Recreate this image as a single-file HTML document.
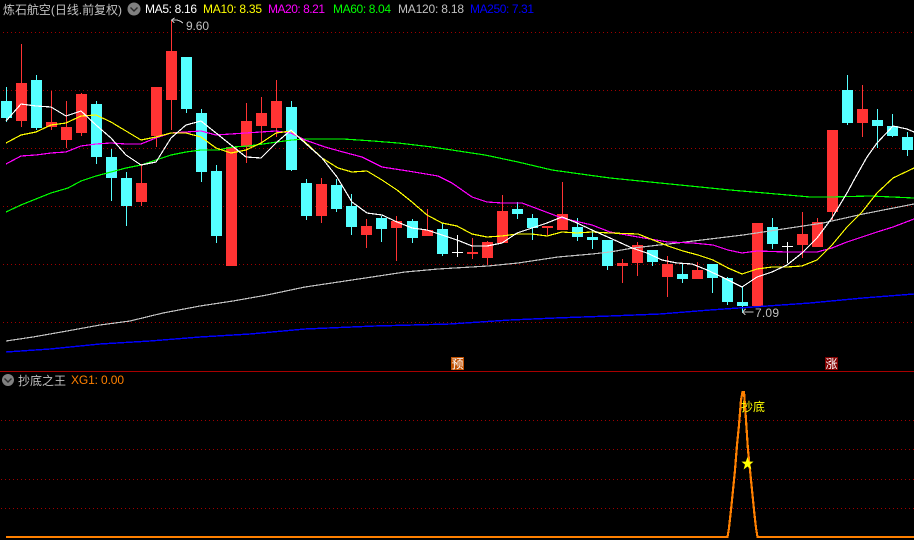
<!DOCTYPE html>
<html>
<head>
<meta charset="utf-8">
<style>
html,body{margin:0;padding:0;background:#000;width:914px;height:540px;overflow:hidden}
svg{display:block;position:absolute;left:0;top:0}
text{font-family:"Liberation Sans","WenQuanYi Zen Hei","Noto Sans CJK SC",sans-serif;font-size:12px}
</style>
</head>
<body>
<svg width="914" height="540" viewBox="0 0 914 540" xmlns="http://www.w3.org/2000/svg">
<rect width="914" height="540" fill="#000"/>
<g stroke="#a00000" stroke-width="1" stroke-dasharray="1 3" shape-rendering="crispEdges" fill="none">
<path d="M3 32.5H914M3 90.5H914M3 148.5H914M3 206.5H914M3 264.5H914M3 322.5H914M1 420.5H914M1 449.5H914M1 479.5H914M1 508.5H914"/>
</g>
<rect x="0" y="371" width="914" height="1" fill="#a80000"/>

<path fill="#ff3333" shape-rendering="crispEdges" d="
M21 44h1v83h-1zM16 83h11v38h-11z
M51 91h1v39h-1zM46 122h11v5h-11z
M66 101h1v47h-1zM61 127h11v13h-11z
M81 93h1v43h-1zM76 94h11v39h-11z
M141 164h1v42h-1zM136 183h11v19h-11z
M156 87h1v60h-1zM151 87h11v49h-11z
M171 20h1v110h-1zM166 51h11v49h-11z
M226 147h11v119h-11z
M246 103h1v60h-1zM241 121h11v26h-11z
M261 97h1v47h-1zM256 113h11v13h-11z
M276 80h1v57h-1zM271 101h11v27h-11z
M321 178h1v45h-1zM316 184h11v32h-11z
M366 219h1v29h-1zM361 226h11v9h-11z
M396 216h1v45h-1zM391 221h11v7h-11z
M427 209h1v27h-1zM422 230h11v6h-11z
M472 238h1v21h-1zM467 252h11v2h-11z
M487 241h1v24h-1zM482 242h11v16h-11z
M502 195h1v48h-1zM497 211h11v32h-11z
M547 226h1v9h-1zM542 226h11v2h-11z
M562 182h1v48h-1zM557 214h11v16h-11z
M622 259h1v24h-1zM617 263h11v3h-11z
M637 242h1v34h-1zM632 245h11v18h-11z
M667 256h1v41h-1zM662 264h11v13h-11z
M697 262h1v17h-1zM692 270h11v9h-11z
M752 223h11v83h-11z
M802 212h1v46h-1zM797 234h11v11h-11z
M817 218h1v29h-1zM812 222h11v25h-11z
M832 130h1v90h-1zM827 130h11v82h-11z
M862 85h1v52h-1zM857 109h11v14h-11z"/>

<path fill="#55ffff" shape-rendering="crispEdges" d="
M6 87h1v35h-1zM1 101h11v17h-11z
M36 75h1v55h-1zM31 80h11v48h-11z
M96 101h1v63h-1zM91 104h11v53h-11z
M111 149h1v52h-1zM106 157h11v21h-11z
M126 172h1v54h-1zM121 178h11v28h-11z
M186 57h1v56h-1zM181 57h11v52h-11z
M201 109h1v73h-1zM196 113h11v59h-11z
M216 165h1v78h-1zM211 171h11v65h-11z
M291 101h1v70h-1zM286 107h11v63h-11z
M306 179h1v41h-1zM301 183h11v33h-11z
M336 179h1v33h-1zM331 185h11v24h-11z
M351 194h1v41h-1zM346 206h11v21h-11z
M381 216h1v26h-1zM376 218h11v11h-11z
M412 219h1v24h-1zM407 221h11v17h-11z
M442 223h1v33h-1zM437 229h11v25h-11z
M517 202h1v17h-1zM512 209h11v5h-11z
M532 214h1v26h-1zM527 218h11v10h-11z
M577 218h1v23h-1zM572 227h11v10h-11z
M592 230h1v19h-1zM587 237h11v3h-11z
M607 240h1v30h-1zM602 240h11v26h-11z
M652 250h1v16h-1zM647 250h11v12h-11z
M682 264h1v19h-1zM677 274h11v5h-11z
M712 264h1v29h-1zM707 264h11v14h-11z
M727 277h1v28h-1zM722 278h11v24h-11z
M742 287h1v26h-1zM737 302h11v4h-11z
M772 218h1v31h-1zM767 227h11v17h-11z
M847 75h1v50h-1zM842 90h11v33h-11z
M877 109h1v39h-1zM872 120h11v6h-11z
M892 114h1v23h-1zM887 126h11v10h-11z
M907 132h1v24h-1zM902 137h11v13h-11z"/>

<path fill="#ffffff" shape-rendering="crispEdges" d="M457 235h1v22h-1zM452 252h11v1h-11zM787 242h1v21h-1zM782 246h11v1h-11z"/>

<g fill="none" shape-rendering="crispEdges" stroke-linejoin="round">
<polyline stroke="#0000ff" stroke-width="1.4" points="6,352 50,349 100,344 150,341 200,337 250,334 305,329 375,326 450,324 510,320 555,318 610,316 660,314 710,310 753,307 810,303 863,298 914,294"/>
<polyline stroke="#c0c0c0" stroke-width="1.2" points="6,341 33,337 67,331 100,325 130,321 163,313 200,306 233,301 267,295 305,287 372,277 405,272 438,269 488,266 518,263 558,257 592,254 610,252 633,248 677,243 710,239 743,235 783,229 823,223 863,214 914,204"/>
<polyline stroke="#00ff00" stroke-width="1.2" points="6,212 21,205 36,199 51,193 68,188 81,181 96,176 111,172 126,168 141,165 156,160 171,155 186,152 201,150 218,150 233,147 248,146 263,144 277,142 292,140 305,139 343,139 373,141 398,143 432,147 465,152 485,155 518,162 552,170 588,175 610,178 630,180 660,183 690,186 730,190 765,193 810,197 830,197 870,196 914,198"/>
<polyline stroke="#ff00ff" stroke-width="1.2" points="6,164 21,156 36,155 51,153 66,152 81,146 96,144 111,143 126,144 141,144 156,138 171,133 186,132 201,131 216,135 231,134 246,133 261,132 276,131 291,133 305,140 325,147 343,152 362,157 382,167 408,171 438,176 452,183 472,197 487,202 502,203 522,203 538,209 562,218 592,225 610,232 638,237 668,242 693,243 713,245 728,250 742,253 757,251 787,252 817,252 832,248 847,242 877,232 893,227 914,219"/>
<polyline stroke="#ffff00" stroke-width="1.2" points="6,143 21,135 36,132 51,125 66,123 81,116 96,115 111,122 126,131 141,140 156,137 171,133 186,133 201,137 216,148 231,153 246,150 261,143 276,133 291,131 305,142 322,158 338,168 352,172 367,171 382,180 397,190 412,202 427,215 442,223 457,226 472,234 487,237 502,236 517,234 532,234 547,236 562,232 577,233 592,232 610,233 638,234 653,240 668,246 683,251 698,255 713,260 728,268 742,274 757,269 772,267 787,267 802,266 817,260 832,245 847,227 862,212 877,193 893,178 914,168"/>
<polyline stroke="#ffffff" stroke-width="1.2" points="6,121 21,104 36,106 51,107 66,116 81,111 96,125 111,138 126,155 141,165 156,162 171,138 186,125 201,121 216,133 231,145 246,157 261,158 276,143 291,130 305,143 322,158 337,177 352,202 367,213 382,215 397,222 412,228 427,230 442,235 457,240 472,246 487,246 502,243 517,233 532,228 547,223 562,217 577,223 592,230 610,238 632,248 647,253 662,260 677,263 692,264 707,270 722,277 742,287 757,277 772,272 787,265 802,253 817,238 832,218 847,193 854,180 867,157 877,143 893,126 907,129 914,132"/>
</g>

<!-- high/low markers -->
<path d="M171.5 20h6M171.5 20l3-2M171.5 20l3 3" stroke="#c0c0c0" stroke-width="1" fill="none" shape-rendering="crispEdges"/>
<path d="M177 20l3 1 3 2" stroke="#c0c0c0" stroke-width="1" fill="none" shape-rendering="crispEdges"/>
<text x="186" y="30" fill="#c0c0c0" textLength="23">9.60</text>
<path d="M742.5 312h11M742.5 312l3-3M742.5 312l3 3" stroke="#c0c0c0" stroke-width="1" fill="none" shape-rendering="crispEdges"/>
<text x="755" y="317" fill="#c0c0c0" textLength="24">7.09</text>

<!-- header -->
<text x="3" y="14" fill="#c0c0c0" textLength="119">炼石航空(日线.前复权)</text>
<circle cx="134" cy="9" r="6.5" fill="#808080"/>
<path d="M130.5 7.5l3.5 3.5 3.5-3.5" stroke="#2a2a2a" stroke-width="1.4" fill="none"/>
<text x="145" y="13" fill="#ffffff" textLength="52">MA5: 8.16</text>
<text x="203" y="13" fill="#ffff00" textLength="59">MA10: 8.35</text>
<text x="268" y="13" fill="#ff00ff" textLength="57">MA20: 8.21</text>
<text x="333" y="13" fill="#00ff00" textLength="58">MA60: 8.04</text>
<text x="398" y="13" fill="#c0c0c0" textLength="66">MA120: 8.18</text>
<text x="470" y="13" fill="#0000ff" textLength="64">MA250: 7.31</text>

<!-- tags -->
<rect x="451" y="357" width="13" height="13" fill="#c05000"/>
<text x="451.5" y="368" fill="#ffffff">预</text>
<rect x="825" y="357" width="13" height="13" fill="#800000"/>
<text x="825.5" y="368" fill="#ffffff">涨</text>

<!-- indicator -->
<circle cx="8" cy="380" r="6" fill="#808080"/>
<path d="M4.5 378.5l3.5 3.5 3.5-3.5" stroke="#2a2a2a" stroke-width="1.4" fill="none"/>
<text x="18" y="385" fill="#c0c0c0" textLength="48">抄底之王</text>
<text x="71" y="384" fill="#ff8000" textLength="53">XG1: 0.00</text>

<path d="M6 537H727.5L729 528 731 510 733 490 735 470 737 445 739 425 741 400 742.5 392 744 392 746 420 748 450 750 470 752 490 754 510 756 528 757.5 537H914" fill="none" stroke="#ff8000" stroke-width="2.2" shape-rendering="crispEdges"/>
<text x="741" y="411" fill="#ffff00">抄底</text>
<polygon points="747.5,457 749.2,461.6 753.5,461.6 750,464.6 751.4,469.5 747.5,466.5 743.6,469.5 745,464.6 741.5,461.6 745.8,461.6" fill="#ffff00"/>
</svg>
</body>
</html>
